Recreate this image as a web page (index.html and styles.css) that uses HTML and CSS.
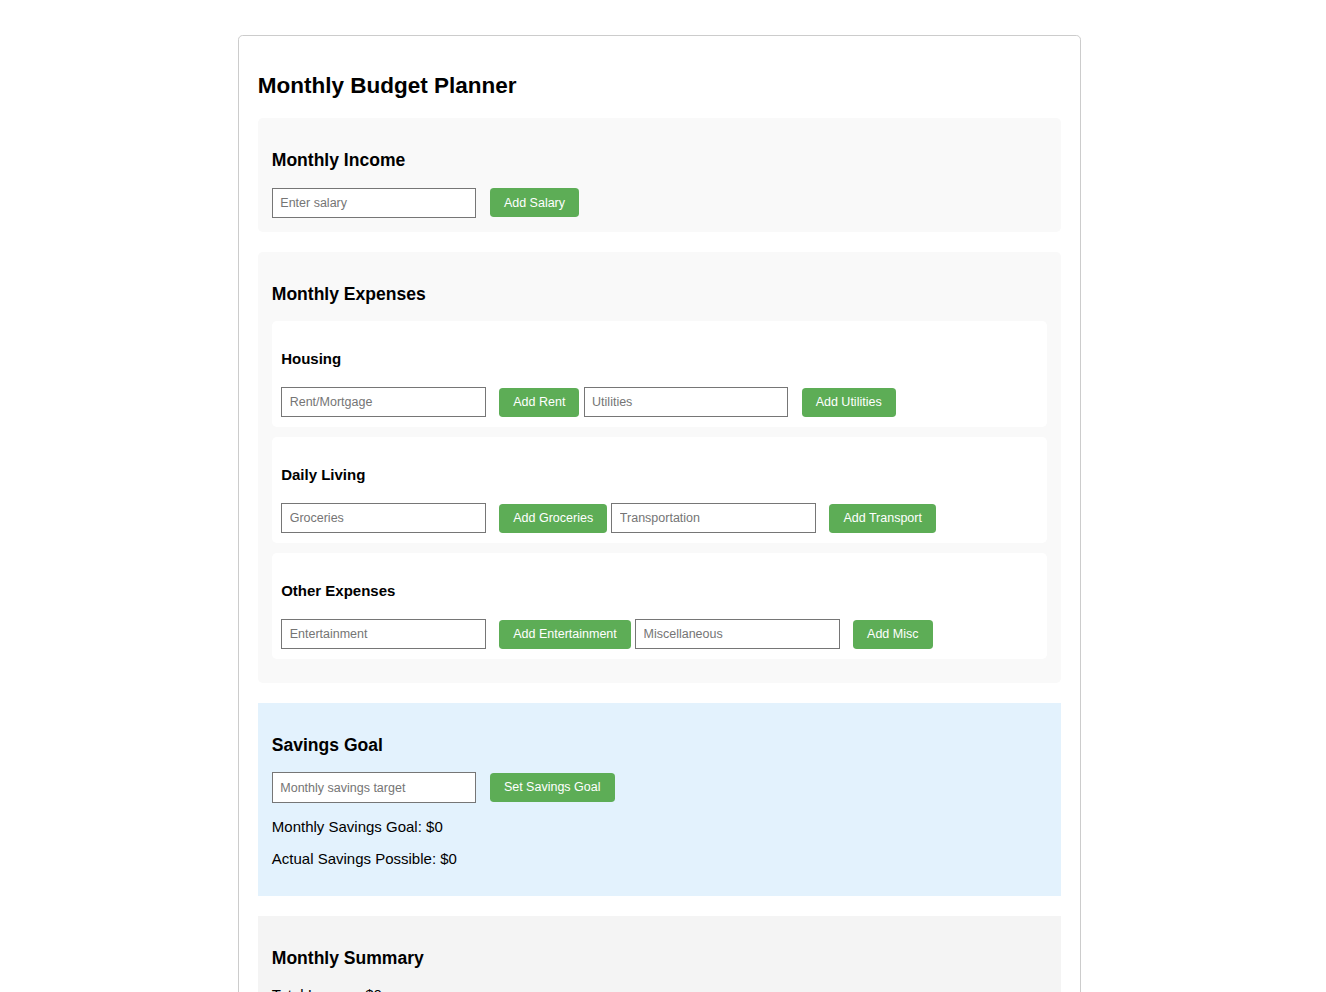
FILE: index.html
```
<!DOCTYPE html>
<html lang="en">
<head>
<meta charset="utf-8">
<title>Monthly Budget Planner</title>
<link rel="stylesheet" href="styles.css">
</head>
<body>
<div class="container">
  <h1 class="title">Monthly Budget Planner</h1>

  <section class="section section-income">
    <h3 class="section-title">Monthly Income</h3>
    <div class="row">
      <input class="field" type="text" placeholder="Enter salary">
      <button class="btn">Add Salary</button>
    </div>
  </section>

  <section class="section section-expenses">
    <h3 class="section-title">Monthly Expenses</h3>
    <div class="category">
      <h4 class="category-title">Housing</h4>
      <div class="row">
        <input class="field" type="text" placeholder="Rent/Mortgage">
        <button class="btn">Add Rent</button>
        <input class="field" type="text" placeholder="Utilities">
        <button class="btn">Add Utilities</button>
      </div>
    </div>
    <div class="category">
      <h4 class="category-title">Daily Living</h4>
      <div class="row">
        <input class="field" type="text" placeholder="Groceries">
        <button class="btn">Add Groceries</button>
        <input class="field" type="text" placeholder="Transportation">
        <button class="btn">Add Transport</button>
      </div>
    </div>
    <div class="category">
      <h4 class="category-title">Other Expenses</h4>
      <div class="row">
        <input class="field" type="text" placeholder="Entertainment">
        <button class="btn">Add Entertainment</button>
        <input class="field" type="text" placeholder="Miscellaneous">
        <button class="btn">Add Misc</button>
      </div>
    </div>
  </section>

  <section class="section section-savings">
    <h3 class="section-title">Savings Goal</h3>
    <div class="row">
      <input class="field" type="text" placeholder="Monthly savings target">
      <button class="btn">Set Savings Goal</button>
    </div>
    <p class="stat">Monthly Savings Goal: $0</p>
    <p class="stat">Actual Savings Possible: $0</p>
  </section>

  <section class="section section-summary">
    <h3 class="section-title">Monthly Summary</h3>
    <p class="stat">Total Income: $0</p>
    <p class="stat">Total Expenses: $0</p>
    <p class="stat">Remaining Balance: $0</p>
  </section>
</div>
</body>
</html>
```
FILE: styles.css
```
html, body {
  background: #ffffff;
}

body {
  margin: 0;
  padding: 35px 7px 30px 0;
  font-family: "Liberation Sans", Arial, sans-serif;
  font-size: 15px;
  line-height: 1.15;
  color: #000000;
}

.container {
  box-sizing: border-box;
  width: 843px;
  margin: 0 auto;
  padding: 18.75px;
  border: 1px solid #cccccc;
  border-radius: 4.7px;
  background: #ffffff;
}

.title {
  margin: 17.85px 0 19.85px;
  font-size: 22.5px;
  font-weight: bold;
  line-height: 1.15;
}

.section {
  padding: 14.06px;
  margin-bottom: 19.8px;
  border-radius: 4.7px;
}

.section-income,
.section-expenses {
  background: #f9f9f9;
}

.section-savings {
  background: #e3f2fd;
  border-radius: 0;
}

.section-summary {
  background: #f4f4f4;
  border-radius: 0;
}

.section-title {
  margin: 17.55px 0;
  font-size: 17.55px;
  font-weight: bold;
  line-height: 1.15;
}

.category {
  background: #ffffff;
  padding: 9.375px;
  margin-bottom: 10.5px;
  border-radius: 4.7px;
}

.category-title {
  margin: 19.5px 0;
  font-size: 15px;
  font-weight: bold;
  line-height: 1.15;
}

.row {
  display: flex;
  align-items: center;
  gap: 4.17px;
}

.field {
  box-sizing: border-box;
  width: 204.5px;
  height: 30.5px;
  margin: 0 9.375px 0 0;
  padding: 7px 7.5px;
  border: 1px solid #767676;
  border-radius: 0;
  background: #ffffff;
  font-family: "Liberation Sans", Arial, sans-serif;
  font-size: 12.5px;
  line-height: 14.5px;
  color: #000000;
}

.field::placeholder {
  color: #757575;
}

.btn {
  box-sizing: border-box;
  height: 28.8px;
  padding: 0 14.06px;
  border: none;
  border-radius: 3.75px;
  background: #5dad56;
  color: #ffffff;
  font-family: "Liberation Sans", Arial, sans-serif;
  font-size: 12.5px;
  line-height: 14.4px;
  cursor: pointer;
  white-space: nowrap;
}

.stat {
  margin: 15px 0;
  font-size: 15px;
  line-height: 1.15;
}
```
